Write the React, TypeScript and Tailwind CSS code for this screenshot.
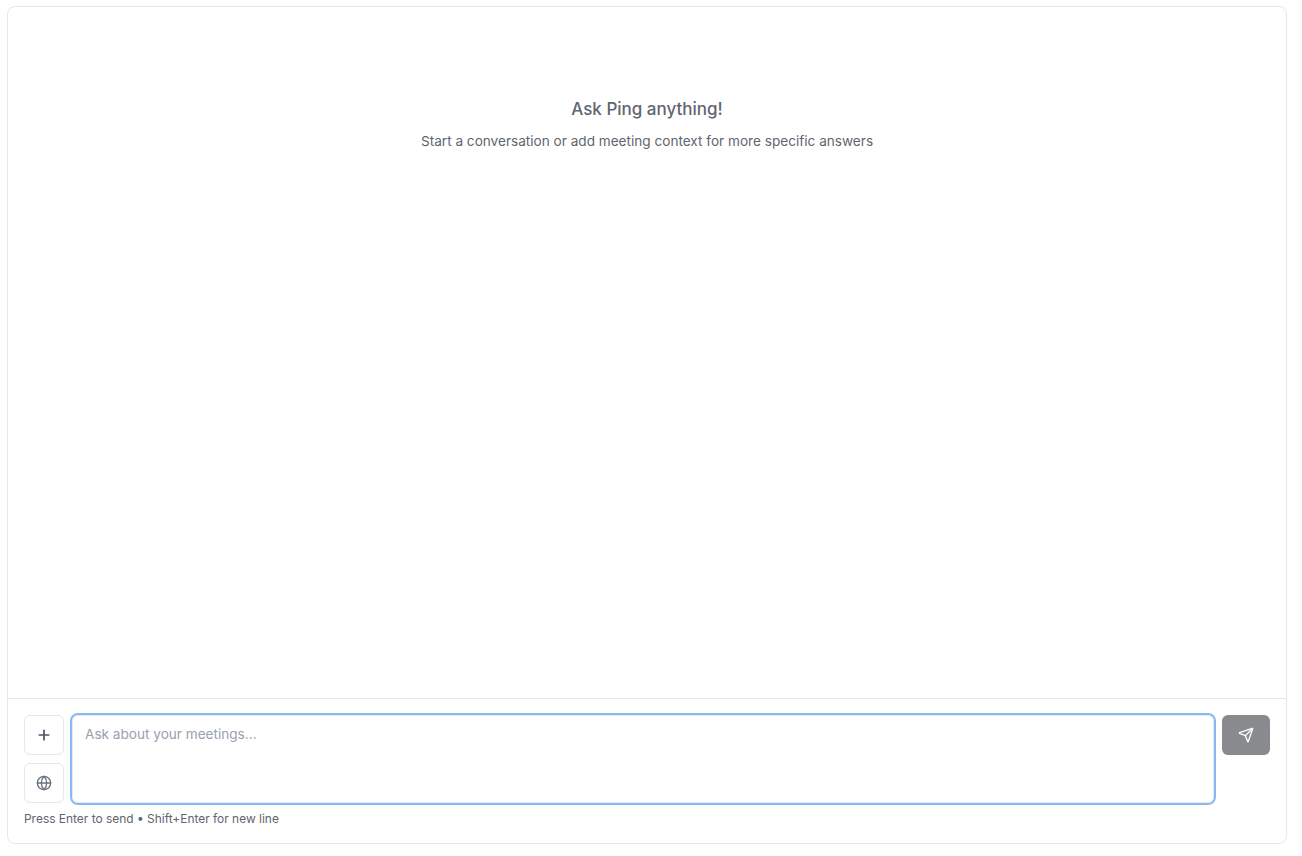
import { Globe, Plus, Send } from 'lucide-react';

const App = () => {
  return (
    <div className="h-[856px] bg-white pt-[6px] pl-[7px] pr-[15px] pb-3 font-['Inter',sans-serif]">
      <div className="flex h-[838px] flex-col rounded-lg border border-gray-200 bg-white">
        <div className="flex-1 pt-[90px] text-center">
          <h2 className="text-[17px] leading-6 font-medium text-[#5f6570]">Ask Ping anything!</h2>
          <p className="mt-[10px] text-[13.6px] leading-5 text-[#5f6570]">
            Start a conversation or add meeting context for more specific answers
          </p>
        </div>

        <div className="h-[145px] border-t border-gray-200 px-4 pt-4">
          <div className="flex gap-2">
            <div className="flex flex-col gap-2">
              <button className="flex size-10 items-center justify-center rounded-md border border-gray-200 bg-white text-gray-600">
                <Plus className="size-4" strokeWidth={2.6} />
              </button>
              <button className="flex size-10 items-center justify-center rounded-md border border-gray-200 bg-white text-gray-500">
                <Globe className="size-4" />
              </button>
            </div>
            <textarea
              className="h-[88px] flex-1 resize-none rounded-md border border-gray-200 px-3 py-2 text-[13.6px] leading-5 text-gray-800 outline-none ring-2 ring-[#86b9f3] placeholder:text-gray-400"
              placeholder="Ask about your meetings..."
            />
            <button className="flex h-10 w-12 items-center justify-center rounded-md bg-[#898a8e] text-white">
              <Send className="size-4" />
            </button>
          </div>
          <p className="mt-2 text-[11.95px] leading-4 text-[#5f6570]">Press Enter to send • Shift+Enter for new line</p>
        </div>
      </div>
    </div>
  );
};

export default App;
